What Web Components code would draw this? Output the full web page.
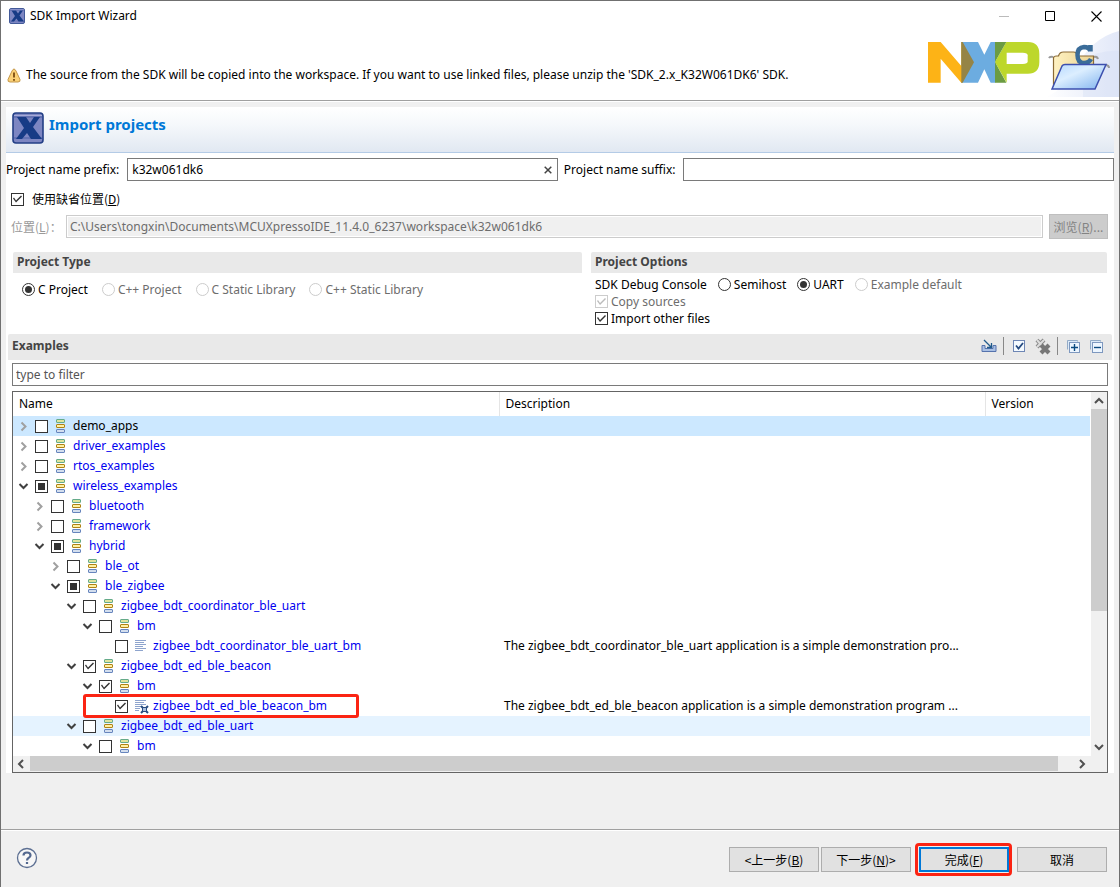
<!DOCTYPE html>
<html lang="zh-CN">
<head>
<meta charset="utf-8">
<title>SDK Import Wizard</title>
<style>
  html, body { margin: 0; }
  body { font: 12px/16px "Noto Sans", "Noto Sans CJK SC", sans-serif; color: #000; background: #f0f0f0; }
</style>
</head>
<body>
<import-wizard></import-wizard>
<script>
const base = `
  *, *::before, *::after { box-sizing: border-box; }
  button, input { font: inherit; color: inherit; margin: 0; }
  svg { display: block; }
  [lang=zh] { font-family: "Noto Sans CJK SC", sans-serif; }
`;
const markCss = `
  input[type=checkbox], input[type=radio] {
    appearance: none; flex: none; width: 13px; height: 13px; margin: 0;
    border: 1px solid #333; background: #fff; display: grid; place-items: center;
  }
  input[type=radio] { border-radius: 50%; }
  input[type=radio]:checked::before { content: ""; width: 7px; height: 7px; border-radius: 50%; background: #333; }
  input[type=checkbox]:indeterminate::before { content: ""; width: 7px; height: 7px; background: #333; }
  input[type=checkbox]:checked::before {
    content: ""; width: 11px; height: 11px; background: #333;
    clip-path: polygon(1px 5px, 2px 4px, 4px 7px, 9px 2px, 10px 3px, 4px 9px);
  }
  input:disabled { border-color: #ccc; }
  input[type=checkbox]:disabled:checked::before { background: #bbb; }
`;
function define(name, html, setup) {
  const tpl = document.createElement('template');
  tpl.innerHTML = html;
  customElements.define(name, class extends HTMLElement {
    constructor() {
      super();
      this.attachShadow({ mode: 'open' }).append(tpl.content.cloneNode(true));
    }
    connectedCallback() { if (setup) setup(this, this.shadowRoot); }
  });
}

define('x-badge', `
  <style>:host { display: block; flex: none; width: 16px; height: 16px; } svg { display: block; width: 100%; height: 100%; }</style>
  <svg viewBox="0 0 32 32" aria-hidden="true">
    <rect x="1" y="1" width="30" height="30" rx="3" fill="#7d86c2" stroke="#233f86" stroke-width="1.6"/>
    <path d="M2 5h28M2 26h28" stroke="#4d5ea6" stroke-width="1"/>
    <path d="M5 5h9l4 6 4-6h6l-7 10 9 12H19l-4-6-5 6H4l8-11z" fill="#173b86"/>
    <path d="M2 3.500h28" stroke="#a5abd8"/>
  </svg>`);

define('title-bar', `
  <style>${base}
    :host { display: flex; align-items: center; height: 30px; padding-left: 8px; background: #fff; }
    h1 { font: inherit; margin: 0 0 0 5px; flex: 1; }
    button { width: 46px; height: 28px; border: 0; padding: 0; background: none; display: grid; place-items: center; }
  </style>
  <x-badge></x-badge><h1><slot></slot></h1>
  <button disabled aria-label="Minimize"><svg width="11" height="11"><path d="M0 5.500h10" stroke="#bbb"/></svg></button>
  <button aria-label="Maximize"><svg width="11" height="11"><path d="M.5.500h9v9h-9z" fill="none" stroke="#000"/></svg></button>
  <button aria-label="Close"><svg width="11" height="11"><path d="M.5.500l10 10M10.500.500l-10 10" stroke="#000" stroke-width="1.100"/></svg></button>
`);

define('nxp-logo', `
  <style>:host { display: block; flex: none; } svg { display: block; }</style>
  <svg width="112" height="41" viewBox="0 0 336 123" role="img" aria-label="NXP">
    <path d="M100 0H150L169 38 188 0H202V122H188L169 82 150 122H100z" fill="#6cace0"/>
    <path d="M0 0H38L100 72V0H102V122H100L38 50V122H0z" fill="#fdb316"/>
    <path d="M100 0H104L138 61L104 122H100z" fill="#958446"/>
    <path d="M201 60L235 0H300Q334 0 334 36V60Q334 95 300 95H236V122z" fill="#bdd72b"/>
    <path d="M236 32H284Q299 32 299 40V58Q299 66 284 66H236z" fill="#fff"/>
    <path d="M201 0H235L201 60zM201 122H235L201 60z" fill="#6b9b42"/>
  </svg>`);

define('folder-art', `
  <style>:host { display: block; flex: none; } svg { display: block; }</style>
  <svg width="74" height="66" viewBox="0 0 74 66" aria-hidden="true">
    <defs>
      <linearGradient id="sky" x1="0" x2="1"><stop offset="0" stop-color="#fff"/><stop offset="1" stop-color="#e2e8f8"/></linearGradient>
      <linearGradient id="front" x1="0" y1="0" x2="1" y2="1"><stop offset="0" stop-color="#b4d8ff"/><stop offset=".4" stop-color="#dceeff"/><stop offset="1" stop-color="#7eb2ee"/></linearGradient>
      <linearGradient id="back" x1="0" x2="1"><stop offset="0" stop-color="#fff2c2"/><stop offset="1" stop-color="#ead292"/></linearGradient>
    </defs>
    <path d="M0 66Q14 62 28 42Q45 7 74 0V66z" fill="url(#sky)"/>
    <path d="M38 30Q55 18 74 20V66H38z" fill="#d5dff4" opacity=".4"/>
    <path d="M4 27q1-2 4-1M49 26q3-1 4 2M60 34q4 0 4 3" fill="none" stroke="#999" stroke-width="2"/>
    <path d="M8.500 57V27q0-2 3-2h2q1-4 5-4h10q3 0 4 4h16v20L10 57z" fill="url(#back)" stroke="#8b6b35" stroke-width="1.200"/>
    <path d="M45.500 14V20.500M45.500 20Q44 16 39 16Q32.500 16.500 32.500 24Q32.500 32 39 32Q44 32 46 28" fill="none" stroke="#3a6c99" stroke-width="4.500"/>
    <path d="M7 58L17 35Q18 33.500 20 33.500H61L50 58z" fill="url(#front)" stroke="#3c4fae" stroke-width="1.500"/>
  </svg>`);

define('wizard-banner', `
  <style>${base}
    :host { display: flex; height: 69px; background: #fff; }
    .msg { flex: 1; display: flex; align-items: center; align-self: flex-end; height: 50px; gap: 5px; padding-left: 6px; }
    nxp-logo { margin: 11px 5px 0 0; }
  </style>
  <div class="msg" role="status">
    <svg width="14" height="15" viewBox="0 0 14 15" aria-hidden="true"><path d="M7 1Q8 1 9 3L13 11.500Q13.500 14 11 14H3Q.5 14 1 11.500L5 3Q6 1 7 1z" fill="#fbd176" stroke="#c4974a"/><path d="M7 4.500v5M7 11v1.700" stroke="#7a4a10" stroke-width="1.800"/></svg>
    <slot></slot>
  </div>
  <nxp-logo></nxp-logo><folder-art></folder-art>`);

define('form-heading', `
  <style>${base}
    :host { display: flex; gap: 5px; box-sizing: border-box; height: 46px; padding: 5px 6px; background: linear-gradient(#fff, #f5f8fb 40%, #e1e8f2); border-bottom: 1px solid #b4cbe6; }
    x-badge { width: 32px; height: 32px; }
    h2 { margin: 2px 0 0; font-size: 15px; line-height: 20px; color: #0078d7; }
  </style>
  <x-badge></x-badge><h2><slot></slot></h2>`);

define('name-fields', `
  <style>${base}
    :host { display: flex; align-items: center; gap: 6px; padding-top: 5px; }
    .box { flex: 1; display: flex; height: 23px; border: 1px solid #7a7a7a; background: #fff; }
    input { flex: 1; min-width: 0; border: 0; padding: 0 4px; background: none; outline: 0; }
    button { width: 18px; border: 0; padding: 0; background: none; display: grid; place-items: center; }
    label { white-space: nowrap; padding-right: 2px; }
  </style>
  <label for="prefix">Project name prefix:</label>
  <div class="box"><input id="prefix" type="text" value="k32w061dk6"><button aria-label="Clear"><svg width="8" height="8"><path d="M.7.700l6.600 6.600M7.300.700L.7 7.300" stroke="#444" stroke-width="1.500"/></svg></button></div>
  <label for="suffix">Project name suffix:</label>
  <div class="box"><input id="suffix" type="text"></div>`);

define('location-fields', `
  <style>${base}${markCss}
    :host { display: block; padding: 10px 6px 0 5px; }
    .use { display: flex; align-items: center; gap: 8px; height: 16px; }
    .row { display: flex; align-items: center; height: 25px; margin-top: 7px; gap: 6px; color: #6d6d6d; }
    .row label { width: 49px; color: #999; white-space: nowrap; }
    .row input { flex: 1; min-width: 0; height: 23px; border: 1px solid #ccc; padding: 0 3px; background: #f0f0f0; box-shadow: inset 0 0 0 1px #fff; }
    button { width: 59px; height: 25px; padding: 0; border: 1px solid #bfbfbf; background: #ccc; color: #838383; }
  </style>
  <div class="use"><input id="use" type="checkbox" checked><label for="use" lang="zh">使用缺省位置(<u>D</u>)</label></div>
  <div class="row"><label for="loc" lang="zh">位置(<u>L</u>)：</label>
    <input id="loc" type="text" disabled value="C:\\Users\\tongxin\\Documents\\MCUXpressoIDE_11.4.0_6237\\workspace\\k32w061dk6">
    <button disabled lang="zh">浏览(<u>R</u>)...</button></div>`);

define('option-group', `
  <style>${base}
    :host { display: block; min-width: 0; }
    h3 { margin: 0; height: 21px; padding-left: 4px; font-size: 12px; line-height: 20px; color: #444; background: #e9e9e9; border-radius: 2px 2px 0 0; }
  </style>
  <h3><slot name="title"></slot></h3><slot></slot>`);

define('mark-option', `
  <style>${base}${markCss}
    :host { display: block; }
    label { display: flex; align-items: center; gap: 3px; height: 17px; white-space: nowrap; }
    :host([disabled]) label { color: #6d6d6d; }
  </style>
  <label><input><span><slot></slot></span></label>`, (host, root) => {
  const i = root.querySelector('input');
  i.type = host.getAttribute('type');
  i.checked = host.hasAttribute('checked');
  i.disabled = host.hasAttribute('disabled');
});

define('project-settings', `
  <style>${base}
    :host { display: grid; box-sizing: border-box; grid-template-columns: 569fr 516fr; gap: 9px; padding: 13px 7px 0; height: 95px; }
    .types { display: flex; gap: 14px; padding: 8px 9px 0; }
    .opts { padding: 3px 4px 0; }
    .line { display: flex; align-items: center; gap: 11px; }
  </style>
  <option-group><span slot="title">Project Type</span>
    <div class="types">
      <mark-option type="radio" checked>C Project</mark-option>
      <mark-option type="radio" disabled>C++ Project</mark-option>
      <mark-option type="radio" disabled>C Static Library</mark-option>
      <mark-option type="radio" disabled>C++ Static Library</mark-option>
    </div>
  </option-group>
  <option-group><span slot="title">Project Options</span>
    <div class="opts">
      <div class="line"><span>SDK Debug Console</span>
        <mark-option type="radio">Semihost</mark-option>
        <mark-option type="radio" checked>UART</mark-option>
        <mark-option type="radio" disabled>Example default</mark-option></div>
      <mark-option type="checkbox" checked disabled>Copy sources</mark-option>
      <mark-option type="checkbox" checked>Import other files</mark-option>
    </div>
  </option-group>`);

define('examples-bar', `
  <style>${base}
    :host { display: flex; box-sizing: border-box; align-items: center; height: 26px; margin: 0 2px; padding: 0 5px 2px 4px; background: #e9e9e9; border-radius: 2px 2px 0 0; }
    h3 { flex: 1; margin: 0; font-size: 12px; line-height: 16px; color: #444; }
    button { width: 24px; height: 24px; padding: 0; border: 0; background: none; display: grid; place-items: center; }
    button:last-child { width: 22px; }
    i { width: 1px; height: 18px; margin: 0 3px 0 2px; background: #888; }
  </style>
  <h3>Examples</h3>
  <button aria-label="Import"><svg width="16" height="16"><path d="M1 7.500v6h14v-6h-3v3H4v-3z" fill="#a9c0e4" stroke="#5673ad"/><path d="M3 2l7 7M10.500 5v4.500H6" fill="none" stroke="#205a8c" stroke-width="1.300"/></svg></button>
  <i></i>
  <button aria-label="Select all"><svg width="16" height="16"><rect x="2.500" y="2.500" width="11" height="11" fill="#f4faff" stroke="#6e86b4"/><path d="M5 7.500l2.500 3L12 5" fill="none" stroke="#254a80" stroke-width="1.800"/></svg></button>
  <button aria-label="Deselect all"><svg width="16" height="17"><path d="M2 2l7 8M9 2L2 9" stroke="#888" stroke-width="4"/><path d="M2 2l7 8M9 2L2 9" stroke="#ddd" stroke-width="2"/><path d="M6 7l8 8M14 7l-8 8" stroke="#777" stroke-width="4.200"/></svg></button>
  <i></i>
  <button aria-label="Expand all"><svg width="16" height="16"><path d="M2.500 11.500v-9h10v1" fill="#dceaf8" stroke="#93abc7"/><rect x="4.500" y="4.500" width="10" height="10" fill="#edf6ff" stroke="#7e98bf"/><path d="M6 9.500h7M9.500 6v7" stroke="#0b4a80" stroke-width="1.400"/></svg></button>
  <button aria-label="Collapse all"><svg width="16" height="16"><path d="M2.500 11.500v-9h10v1" fill="#dceaf8" stroke="#93abc7"/><rect x="4.500" y="4.500" width="10" height="10" fill="#edf6ff" stroke="#7e98bf"/><path d="M6 9.500h7" stroke="#0b4a80" stroke-width="1.400"/></svg></button>
`);

const icons = {
  group: `<svg width="13" height="16" aria-hidden="true">
    <rect x="2.500" y="1.500" width="8" height="3" rx=".5" fill="#dfe49c" stroke="#65ab8a"/>
    <rect x="2.500" y="6.500" width="8" height="3" rx=".5" fill="#fff0a4" stroke="#b08314"/>
    <rect x="2.500" y="11.500" width="8" height="3" rx=".5" fill="#d3deee" stroke="#6785bd"/></svg>`,
  file: `<svg width="13" height="16" aria-hidden="true"><path d="M1 2.500h11M1 4.500h9M1 6.500h11M1 8.500h8M1 10.500h11M1 12.500h8" stroke="#8ea4cd"/></svg>`,
  selected: `<svg width="16" height="16" aria-hidden="true"><path d="M1 2.500h11M1 4.500h9M1 6.500h11M1 8.500h6M1 10.500h5M1 12.500h4" stroke="#8ea4cd"/><path d="M8.500 9.500h4v4h-4z" fill="#a9bfdf" stroke="#274c80"/><path d="M7 8l2 2M14 8l-2 2M7 15l2-2M14 15l-2-2" stroke="#274c80" stroke-width="2"/></svg>`
};

define('tree-node', `
  <style>${base}${markCss}
    :host { display: flex; align-items: center; height: 20px; gap: 6px; padding-left: calc(5px + 16px * var(--level)); color: #0000f0; }
    :host([current]) { color: #000; }
    .arrow { flex: none; width: 11px; height: 11px; }
    .arrow path { fill: none; stroke-width: 2; stroke: #a0a0a0; }
    :host([state=open]) .arrow path { stroke: #404040; }
    .icon { flex: none; width: 13px; }
    label { display: flex; align-items: center; gap: 6px; white-space: nowrap; line-height: 20px; }
  </style>
  <svg class="arrow" aria-hidden="true"><path/></svg>
  <input id="pick" type="checkbox"><label for="pick"><span class="icon"></span><span><slot></slot></span></label>`, (host, root) => {
  host.style.setProperty('--level', host.getAttribute('level'));
  const paths = { open: 'M1.500 3l4 4 4-4', closed: 'M3.500 1.500l4 4-4 4', leaf: '' };
  root.querySelector('.arrow path').setAttribute('d', paths[host.getAttribute('state')]);
  root.querySelector('.icon').innerHTML = icons[host.getAttribute('icon')];
  const box = root.querySelector('input'), mark = host.getAttribute('mark');
  box.checked = mark === 'on';
  box.indeterminate = mark === 'part';
});

// level, state, mark, icon, name, description, row class
const rows = [
  [0, 'closed', '', 'group', 'demo_apps', '', 'current'],
  [0, 'closed', '', 'group', 'driver_examples'],
  [0, 'closed', '', 'group', 'rtos_examples'],
  [0, 'open', 'part', 'group', 'wireless_examples'],
  [1, 'closed', '', 'group', 'bluetooth'],
  [1, 'closed', '', 'group', 'framework'],
  [1, 'open', 'part', 'group', 'hybrid'],
  [2, 'closed', '', 'group', 'ble_ot'],
  [2, 'open', 'part', 'group', 'ble_zigbee'],
  [3, 'open', '', 'group', 'zigbee_bdt_coordinator_ble_uart'],
  [4, 'open', '', 'group', 'bm'],
  [5, 'leaf', '', 'file', 'zigbee_bdt_coordinator_ble_uart_bm', 'The zigbee_bdt_coordinator_ble_uart application is a simple demonstration pro...'],
  [3, 'open', 'on', 'group', 'zigbee_bdt_ed_ble_beacon'],
  [4, 'open', 'on', 'group', 'bm'],
  [5, 'leaf', 'on', 'selected', 'zigbee_bdt_ed_ble_beacon_bm', 'The zigbee_bdt_ed_ble_beacon application is a simple demonstration program ...', 'marked'],
  [3, 'open', '', 'group', 'zigbee_bdt_ed_ble_uart', '', 'hover'],
  [4, 'open', '', 'group', 'bm']
];

define('examples-tree', `
  <style>${base}
    :host { display: grid; grid-template-columns: 1fr 17px; grid-template-rows: auto 16px; border: 1px solid #646464; background: #fff; }
    table { width: 100%; border-collapse: collapse; table-layout: fixed; }
    .c { width: 486px; }
    th { height: 24px; padding: 0 6px; font-weight: normal; text-align: left; border-right: 1px solid #e5e5e5; }
    th:last-child { border: 0; }
    td { height: 20px; padding: 0; position: relative; }
    td + td { padding-left: 5px; white-space: nowrap; line-height: 20px; }
    .current { background: #cce8ff; }
    .hover { background: #e5f3ff; }
    .marked td:first-child::after { content: ""; position: absolute; left: 70px; top: -2px; width: 276px; height: 24px; border: 3px solid #fb2413; border-radius: 3px; }
    .bar { display: flex; background: #f0f0f0; }
    .bar svg { flex: none; }
    .bar path { fill: none; stroke: #505050; stroke-width: 2; }
    .bar i { background: #cdcdcd; }
    .v { flex-direction: column; margin-left: 1px; }
    .v i { height: 202px; }
    .v svg:last-child { margin-top: auto; }
    .h { grid-column: 1 / 3; padding-right: 17px; }
    .h i { flex: 1; margin-right: 15px; height: 15px; }
  </style>
  <table><colgroup><col class="c"><col class="c"><col></colgroup>
    <thead><tr><th>Name</th><th>Description</th><th>Version</th></tr></thead><tbody></tbody></table>
  <div class="bar v"><svg width="16" height="17"><path d="M4 11l4-4 4 4"/></svg><i></i><svg width="16" height="17"><path d="M4 6l4 4 4-4"/></svg></div>
  <div class="bar h"><svg width="17" height="16"><path d="M10 4L6 8l4 4"/></svg><i></i><svg width="17" height="16"><path d="M7 4l4 4-4 4"/></svg></div>
`, (host, root) => {
  root.querySelector('tbody').innerHTML = rows.map(([level, state, mark, icon, name, desc = '', cls = '']) =>
    `<tr class="${cls}"><td><tree-node level="${level}" state="${state}" mark="${mark}" icon="${icon}" ${cls === 'current' ? 'current' : ''}>${name}</tree-node></td><td>${desc}</td><td></td></tr>`).join('');
});

define('wizard-footer', `
  <style>${base}
    :host { display: flex; box-sizing: border-box; align-items: center; margin-top: auto; height: 58px; padding: 2px 12px 0 15px; border-top: 1px solid #a0a0a0; box-shadow: inset 0 1px #fff; }
    .help { margin: 0 auto 4px 0; padding: 0; border: 0; background: none; }
    .act { width: 90px; height: 25px; padding: 0; border: 1px solid #adadad; background: #e1e1e1; }
    .act + .act { margin-left: 2px; }
    .act.main { position: relative; margin: 0 8px; border: 2px solid #0078d7; }
    .act.main::after { content: ""; position: absolute; inset: -6px -5px -6px -6px; border: 3px solid #fb2413; border-radius: 4px; }
    .act.main + .act { margin-left: 0; }
  </style>
  <button class="help" aria-label="Help"><svg width="22" height="22"><circle cx="11" cy="11" r="9.500" fill="#f7f7f7" stroke="#5c6f92" stroke-width="1.300"/><path d="M7.500 8.500Q7.500 5.500 11 5.500T14.500 8.200Q14.500 10 12.500 11Q11 11.800 11 13.500M11 15v2" fill="none" stroke="#53688f" stroke-width="2.200"/></svg></button>
  <button class="act" lang="zh">&lt;上一步(<u>B</u>)</button>
  <button class="act" lang="zh">下一步(<u>N</u>)&gt;</button>
  <button class="act main" lang="zh">完成(<u>F</u>)</button>
  <button class="act" lang="zh">取消</button>`);

define('import-wizard', `
  <style>${base}
    :host { display: flex; flex-direction: column; min-height: 100vh; box-sizing: border-box; border: 1px solid #707070; border-bottom: 0; background: #f0f0f0; }
    main { margin: 5px 5px 0; background: #fff; }
    .rule { height: 2px; background: #a0a0a0; border-bottom: 1px solid #fff; }
    .filter { display: block; width: calc(100% - 12px); height: 23px; margin: 3px 6px 5px; padding: 0 3px; border: 1px solid #7a7a7a; background: #fff; }
    .filter::placeholder { color: #555; opacity: 1; }
    examples-tree { margin: 0 6px; }
  </style>
  <title-bar>SDK Import Wizard</title-bar>
  <wizard-banner>The source from the SDK will be copied into the workspace. If you want to use linked files, please unzip the 'SDK_2.x_K32W061DK6' SDK.</wizard-banner>
  <div class="rule"></div>
  <main>
    <form-heading>Import projects</form-heading>
    <name-fields></name-fields>
    <location-fields></location-fields>
    <project-settings></project-settings>
    <examples-bar></examples-bar>
    <input class="filter" type="text" placeholder="type to filter" aria-label="Filter examples">
    <examples-tree></examples-tree>
  </main>
  <wizard-footer></wizard-footer>`);
</script>
</body>
</html>
